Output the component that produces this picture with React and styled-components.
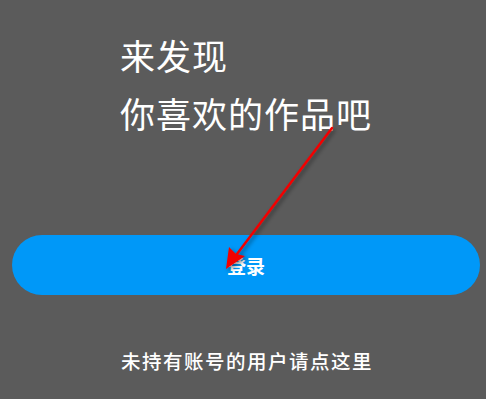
import styled, { createGlobalStyle } from "styled-components";

const GlobalStyle = createGlobalStyle`
  html, body {
    margin: 0;
    padding: 0;
    background: #5b5b5b;
  }
  body {
    font-family: "Noto Sans CJK SC", "Noto Sans", sans-serif;
  }
`;

const Page = styled.div`
  position: relative;
  width: 486px;
  height: 399px;
  background: #5b5b5b;
  color: #fff;
  display: flex;
  flex-direction: column;
  overflow: hidden;
`;

const Heading = styled.h1`
  margin: 0;
  padding: 26px 0 0 120px;
  font-size: 35px;
  font-weight: 400;
  line-height: 58px;
  letter-spacing: 1px;
`;

const LoginButton = styled.button`
  margin: 93px 6px 0 12px;
  height: 60px;
  flex-shrink: 0;
  border: none;
  border-radius: 30px;
  background: #0098f8;
  color: #fff;
  font-family: inherit;
  font-size: 19px;
  font-weight: 700;
  cursor: pointer;
`;

const RegisterLink = styled.p`
  margin: 52px 0 0;
  padding-left: 121px;
  font-size: 19.5px;
  font-weight: 500;
  line-height: 28px;
  letter-spacing: 1.5px;
`;

const Arrow = styled.svg`
  position: absolute;
  left: 0;
  top: 0;
  pointer-events: none;
`;

const App = () => {
  return (
    <Page>
      <GlobalStyle />
      <Heading>
        来发现
        <br />
        你喜欢的作品吧
      </Heading>
      <LoginButton>登录</LoginButton>
      <RegisterLink>未持有账号的用户请点这里</RegisterLink>
      <Arrow width="486" height="399" viewBox="0 0 486 399">
        <defs>
          <filter id="shadow" x="-20%" y="-20%" width="140%" height="140%">
            <feDropShadow dx="2" dy="2" stdDeviation="2" floodColor="#000" floodOpacity="0.45" />
          </filter>
        </defs>
        <g filter="url(#shadow)">
          <line x1="332" y1="128" x2="234" y2="258" stroke="#f20000" strokeWidth="2.5" strokeLinecap="round" />
          <polygon points="226,269 229,247 236,254 245,256" fill="#f20000" />
        </g>
      </Arrow>
    </Page>
  );
};

export default App;
